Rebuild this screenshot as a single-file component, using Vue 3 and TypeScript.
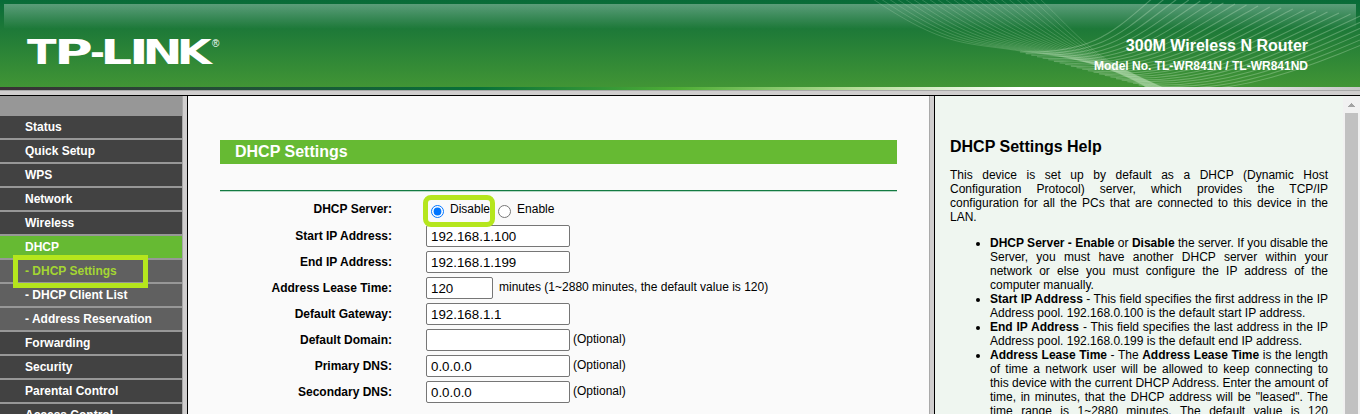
<script setup lang="ts">
import { ref } from 'vue'

interface MenuItem {
  label: string
  kind?: 'active' | 'sub' | 'current'
}

interface Field {
  label: string
  value: string
  short?: boolean
  note?: string
}

const menu: MenuItem[] = [
  { label: 'Status' },
  { label: 'Quick Setup' },
  { label: 'WPS' },
  { label: 'Network' },
  { label: 'Wireless' },
  { label: 'DHCP', kind: 'active' },
  { label: '- DHCP Settings', kind: 'current' },
  { label: '- DHCP Client List', kind: 'sub' },
  { label: '- Address Reservation', kind: 'sub' },
  { label: 'Forwarding' },
  { label: 'Security' },
  { label: 'Parental Control' },
  { label: 'Access Control' },
]

const fields = ref<Field[]>([
  { label: 'Start IP Address:', value: '192.168.1.100' },
  { label: 'End IP Address:', value: '192.168.1.199' },
  { label: 'Address Lease Time:', value: '120', short: true, note: 'minutes (1~2880 minutes, the default value is 120)' },
  { label: 'Default Gateway:', value: '192.168.1.1' },
  { label: 'Default Domain:', value: '', note: '(Optional)' },
  { label: 'Primary DNS:', value: '0.0.0.0', note: '(Optional)' },
  { label: 'Secondary DNS:', value: '0.0.0.0', note: '(Optional)' },
])

const server = ref<'disable' | 'enable'>('disable')

// Start and width of every letter of the stretched wordmark.
const wordmark = [
  { ch: 'T', x: 0, w: 29.5 },
  { ch: 'P', x: 27.2, w: 38.5 },
  { ch: '-', x: 63, w: 14.9 },
  { ch: 'L', x: 73.4, w: 31.6 },
  { ch: 'I', x: 102.1, w: 19.8 },
  { ch: 'N', x: 115.6, w: 40 },
  { ch: 'K', x: 149.8, w: 35 },
]

// Blend two cubic chains point by point to get the wave lines between them.
function blend(from: number[], to: number[], count: number): string[] {
  return Array.from({ length: count }, (_, i) => {
    const t = i / (count - 1)
    const p = from.map((v, k) => (v + (to[k] - v) * t).toFixed(1))
    return `M${p[0]} ${p[1]}C${p.slice(2).join(' ')}`
  })
}

const fallingLines = blend(
  [10, -3, 85, 48, 105, 42, 160, 51, 215, 57, 250, 66, 288, 88],
  [178, -3, 200, 18, 212, 32, 230, 47, 244, 60, 268, 72, 304, 88],
  22,
)
const risingLines = blend(
  [160, 52, 235, 54, 255, 30, 294, -3],
  [290, 88, 375, 98, 440, 72, 560, 20],
  24,
)
</script>

<template>
  <div class="page">
    <header class="banner">
      <div class="gloss"></div>
      <svg class="waves" width="500" height="87" viewBox="0 0 500 87">
        <path v-for="(d, i) in fallingLines" :key="'f' + i" class="falling" :d="d" />
        <path v-for="(d, i) in risingLines" :key="'r' + i" class="rising" :d="d" />
      </svg>
      <svg class="logo" width="200" height="40" viewBox="0 0 200 40">
        <text class="brand" y="29"><tspan v-for="l in wordmark" :key="l.ch" :x="l.x" :textLength="l.w" lengthAdjust="spacingAndGlyphs">{{ l.ch }}</tspan></text>
        <text class="mark" x="185" y="12">®</text>
      </svg>
      <div class="model">
        <div class="model-name">300M Wireless N Router</div>
        <div class="model-no">Model No. TL-WR841N / TL-WR841ND</div>
      </div>
    </header>
    <div class="stripe"></div>
    <div class="frame-line"></div>

    <div class="body">
      <nav class="sidebar">
        <div v-for="m in menu" :key="m.label" class="item" :class="m.kind">{{ m.label }}</div>
        <div class="callout-menu"></div>
      </nav>
      <div class="divider"></div>

      <main class="content">
        <h1>DHCP Settings</h1>
        <div class="rule"></div>
        <div class="row server-row">
          <span class="label">DHCP Server:</span>
          <span class="radios">
            <input v-model="server" type="radio" value="disable" /><span class="opt first">Disable</span>
            <input v-model="server" type="radio" value="enable" /><span class="opt">Enable</span>
            <span class="callout-radio"></span>
          </span>
        </div>
        <div v-for="f in fields" :key="f.label" class="row">
          <span class="label">{{ f.label }}</span>
          <input v-model="f.value" class="box" :class="{ short: f.short }" type="text" />
          <span v-if="f.note" class="note" :class="{ wide: f.short }">{{ f.note }}</span>
        </div>
      </main>
      <div class="divider"></div>

      <aside class="help">
        <h2>DHCP Settings Help</h2>
        <p>This device is set up by default as a DHCP (Dynamic Host Configuration Protocol) server, which provides the TCP/IP configuration for all the PCs that are connected to this device in the LAN.</p>
        <ul>
          <li><b>DHCP Server - Enable</b> or <b>Disable</b> the server. If you disable the Server, you must have another DHCP server within your network or else you must configure the IP address of the computer manually.</li>
          <li><b>Start IP Address</b> - This field specifies the first address in the IP Address pool. 192.168.0.100 is the default start IP address.</li>
          <li><b>End IP Address</b> - This field specifies the last address in the IP Address pool. 192.168.0.199 is the default end IP address.</li>
          <li><b>Address Lease Time</b> - The <b>Address Lease Time</b> is the length of time a network user will be allowed to keep connecting to this device with the current DHCP Address. Enter the amount of time, in minutes, that the DHCP address will be "leased". The time range is 1~2880 minutes. The default value is 120 minutes.</li>
        </ul>
      </aside>
      <div class="scrollbar">
        <svg width="17" height="17" viewBox="0 0 17 17" shape-rendering="crispEdges"><path d="M8 7h1v1h1v1h1v1h1v1H5v-1h1V9h1V8h1z" fill="#a3a3a3" /></svg>
        <div class="thumb"></div>
      </div>
    </div>
  </div>
</template>

<style>
html,
body {
  margin: 0;
  overflow: hidden;
}
</style>

<style scoped>
.page {
  width: 1360px;
  height: 414px;
  overflow: hidden;
  display: flex;
  flex-direction: column;
  font: 12px/14px "Liberation Sans", Arial, sans-serif;
  color: #000;
  background: #fafafa;
}
.banner {
  position: relative;
  flex: none;
  height: 87px;
  display: flex;
  justify-content: space-between;
  background: linear-gradient(#086b38, #1d7938 33%, #419535);
}
.gloss {
  position: absolute;
  left: 4px;
  right: 4px;
  top: 4px;
  height: 25px;
  background: linear-gradient(rgba(255, 255, 255, 0.33), rgba(255, 255, 255, 0));
}
.waves {
  position: absolute;
  right: 0;
  top: 0;
}
.waves path {
  fill: none;
  stroke: #d5f0cf;
}
.falling {
  stroke-opacity: 0.22;
  stroke-width: 0.9;
}
.rising {
  stroke-opacity: 0.3;
  stroke-width: 1.1;
}
.logo {
  position: relative;
  margin: 35px 0 0 27px;
  overflow: visible;
}
.brand {
  font: bold 33px "DejaVu Sans", sans-serif;
  fill: #fff;
}
.mark {
  font: 10px "Liberation Sans", Arial, sans-serif;
  fill: #fff;
}
.model {
  position: relative;
  margin: 37px 52px 0 0;
  color: #fff;
  font-weight: bold;
  text-align: right;
}
.model-name {
  font-size: 16px;
  line-height: 18px;
}
.model-no {
  margin-top: 4px;
}
.stripe {
  flex: none;
  height: 3px;
  background: linear-gradient(90deg, #3a3035, #087038 35%, #4fae36 50%, #b5dd98 63%, #fff 75%, #fff 82%, #c8c8c8);
}
.frame-line {
  flex: none;
  height: 4px;
  background: #d0cece;
  border-top: 1px solid #a9a9a9;
  border-bottom: 1px solid #000;
}
.body {
  height: 318px;
  display: flex;
}
.sidebar {
  position: relative;
  box-sizing: border-box;
  flex: none;
  width: 182px;
  padding-top: 20px;
  background: #979797;
}
.item {
  height: 22px;
  margin-bottom: 2px;
  padding-left: 25px;
  line-height: 22px;
  font-weight: bold;
  color: #fff;
  background: #424242;
  white-space: nowrap;
}
.item.active {
  background: #66ba33;
}
.item.sub,
.item.current {
  background: #606060;
}
.item.current {
  color: #a4d632;
}
.callout-menu {
  position: absolute;
  left: 13px;
  top: 159px;
  width: 125px;
  height: 23px;
  border: 5px solid #b5e61d;
}
.divider {
  flex: none;
  width: 4px;
  background: #d0cece;
  border-left: 1px solid #a9a9a9;
  border-right: 1px solid #000;
}
.content {
  box-sizing: border-box;
  flex: none;
  width: 741px;
  padding: 44px 32px 0;
  background: #fafafa;
}
h1 {
  margin: 0;
  height: 24px;
  padding-left: 15px;
  font-size: 16px;
  line-height: 24px;
  color: #fff;
  background: #66ba33;
}
.rule {
  margin-top: 26px;
  height: 1px;
  background: #147a42;
  border-bottom: 1px solid #b8d8c6;
}
.row {
  display: flex;
  align-items: center;
  height: 26px;
}
.server-row {
  margin-top: 4px;
  height: 27px;
}
.label {
  width: 172px;
  margin-right: 34px;
  text-align: right;
  font-weight: bold;
}
.server-row .label {
  margin-bottom: 2px;
}
.radios {
  display: flex;
  position: relative;
  align-items: flex-start;
  height: 17px;
}
.radios input {
  width: 13px;
  height: 13px;
  margin: 4px 6px 0 5px;
}
.opt {
  margin-top: 1px;
}
.opt.first {
  margin-right: 3px;
}
.callout-radio {
  position: absolute;
  left: -3px;
  top: -6px;
  width: 62px;
  height: 22px;
  border: 5px solid #b5e61d;
  border-radius: 8px;
}
.box {
  box-sizing: border-box;
  width: 144px;
  height: 22px;
  margin: 0;
  padding: 1px 4px;
  font: 13.333px "Liberation Sans", Arial, sans-serif;
  color: #000;
  background: #fff;
  border: 1px solid #767676;
  border-radius: 2px;
  outline: none;
}
.box.short {
  width: 67px;
}
.note {
  margin: 0 0 2px 3px;
}
.note.wide {
  margin-left: 6px;
}
.help {
  box-sizing: border-box;
  flex: none;
  width: 408px;
  padding: 42px 15px 0;
  background: #eff6f0;
  text-align: justify;
}
h2 {
  margin: 0;
  font-size: 16px;
  line-height: 18px;
  text-align: left;
}
p {
  margin: 12px 0;
}
ul {
  margin: 0;
  padding-left: 40px;
}
.scrollbar {
  flex: 1;
  background: #f1f1f1;
}
.scrollbar svg {
  display: block;
}
.thumb {
  margin: 0 2px;
  height: 301px;
  background: #c1c1c1;
}
</style>
